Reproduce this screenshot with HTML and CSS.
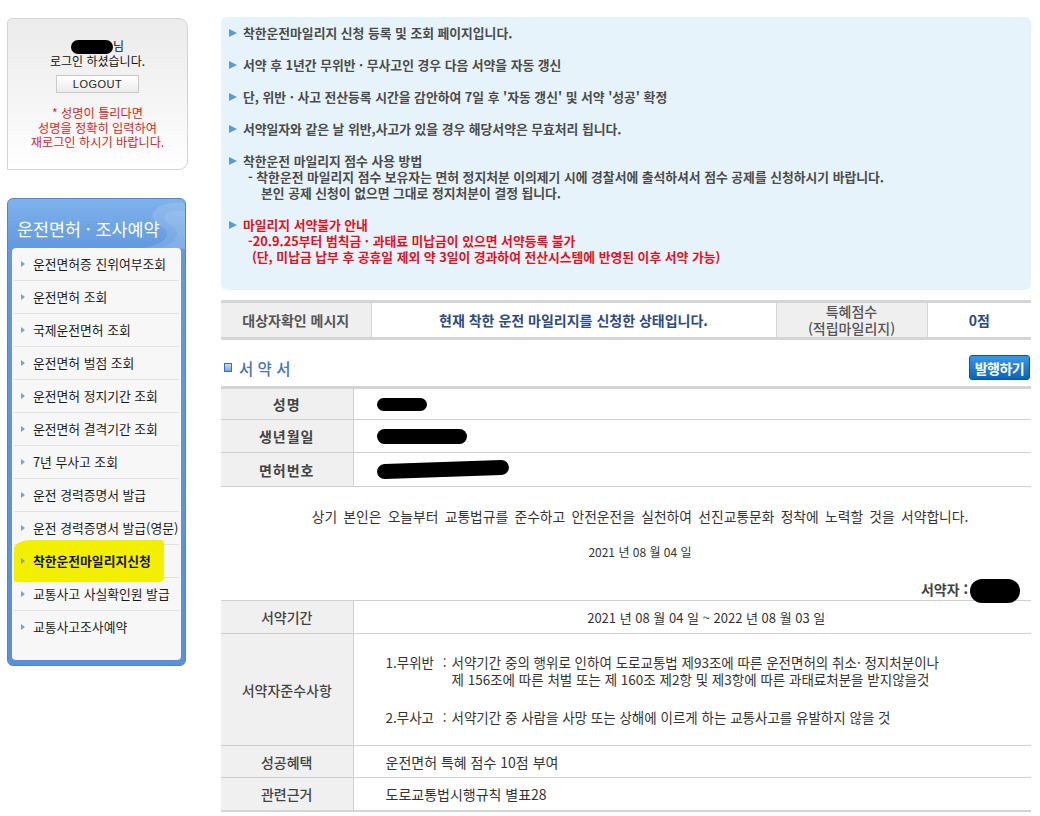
FILE: index.html
```html
<!DOCTYPE html>
<html lang="ko">
<head>
<meta charset="utf-8">
<title>착한운전마일리지신청</title>
<link rel="stylesheet" href="styles.css">
</head>
<body>
<div class="page">
  <aside class="side">
    <div class="login">
      <p><span class="blob blob-name"></span>님</p>
      <p>로그인 하셨습니다.</p>
      <button class="logout" type="button">LOGOUT</button>
      <p class="warn"><span>* 성명이 틀리다면</span><span>성명을 정확히 입력하여</span><span>재로그인 하시기 바랍니다.</span></p>
    </div>
    <nav class="menu">
      <svg class="swirl" width="56" height="48" viewBox="0 0 56 48">
        <path d="M56 2 C36 0 20 8 24 18 C27 26 40 26 38 34 C36 42 22 46 8 48 L56 48 Z" fill="#ffffff" opacity="0.13"/>
        <path d="M56 10 C44 8 34 12 36 18 C38 24 50 26 48 34 C46 40 40 44 30 48 L56 48 Z" fill="#ffffff" opacity="0.10"/>
      </svg>
      <div class="menu-head">운전면허 · 조사예약</div>
      <ul class="menu-list">
        <li><i class="arr"></i>운전면허증 진위여부조회</li>
        <li><i class="arr"></i>운전면허 조회</li>
        <li><i class="arr"></i>국제운전면허 조회</li>
        <li><i class="arr"></i>운전면허 벌점 조회</li>
        <li><i class="arr"></i>운전면허 정지기간 조회</li>
        <li><i class="arr"></i>운전면허 결격기간 조회</li>
        <li><i class="arr"></i>7년 무사고 조회</li>
        <li><i class="arr"></i>운전 경력증명서 발급</li>
        <li><i class="arr"></i>운전 경력증명서 발급(영문)</li>
        <li class="on"><span class="marker"></span><i class="arr"></i>착한운전마일리지신청</li>
        <li><i class="arr"></i>교통사고 사실확인원 발급</li>
        <li><i class="arr"></i>교통사고조사예약</li>
      </ul>
    </nav>
  </aside>

  <main class="main">
    <section class="notice">
      <p>착한운전마일리지 신청 등록 및 조회 페이지입니다.</p>
      <p>서약 후 1년간 무위반 · 무사고인 경우 다음 서약을 자동 갱신</p>
      <p>단, 위반 · 사고 전산등록 시간을 감안하여 7일 후 '자동 갱신' 및 서약 '성공' 확정</p>
      <p>서약일자와 같은 날 위반,사고가 있을 경우 해당서약은 무효처리 됩니다.</p>
      <p>착한운전 마일리지 점수 사용 방법
        <span class="sub">- 착한운전 마일리지 점수 보유자는 면허 정지처분 이의제기 시에 경찰서에 출석하셔서 점수 공제를 신청하시기 바랍니다.</span>
        <span class="sub sub2">본인 공제 신청이 없으면 그대로 정지처분이 결정 됩니다.</span>
      </p>
      <p class="red">마일리지 서약불가 안내
        <span class="sub">-20.9.25부터 범칙금 · 과태료 미납금이 있으면 서약등록 불가</span>
        <span class="sub sub3">(단, 미납금 납부 후 공휴일 제외 약 3일이 경과하여 전산시스템에 반영된 이후 서약 가능)</span>
      </p>
    </section>

    <table class="status">
      <tr>
        <th class="c1">대상자확인 메시지</th>
        <td class="c2">현재 착한 운전 마일리지를 신청한 상태입니다.</td>
        <th class="c3">특혜점수<br>(적립마일리지)</th>
        <td class="c4">0점</td>
      </tr>
    </table>

    <div class="sec-head">
      <h2 class="sec-title"><i class="sq"></i>서 약 서</h2>
      <button class="issue" type="button">발행하기</button>
    </div>

    <table class="form">
      <tr class="f1"><th>성명</th><td><span class="blob b1"></span></td></tr>
      <tr class="f2"><th>생년월일</th><td><span class="blob b2"></span></td></tr>
      <tr class="f3"><th>면허번호</th><td><span class="blob b3"></span></td></tr>
    </table>

    <div class="pledge">
      <p>상기 본인은 오늘부터 교통법규를 준수하고 안전운전을 실천하여 선진교통문화 정착에 노력할 것을 서약합니다.</p>
      <p class="date">2021 년 08 월 04 일</p>
      <p class="signer">서약자 :<span class="blob b4"></span></p>
    </div>

    <table class="terms">
      <tr class="r1"><th>서약기간</th><td class="period">2021 년 08 월 04 일 ~ 2022 년 08 월 03 일</td></tr>
      <tr class="r2"><th>서약자준수사항</th>
        <td>
          <div class="rule"><span class="k"><span>1.무위반</span><span>:</span></span><span>서약기간 중의 행위로 인하여 도로교통법 제93조에 따른 운전면허의 취소· 정지처분이나<br>제 156조에 따른 처벌 또는 제 160조 제2항 및 제3항에 따른 과태료처분을 받지않을것</span></div>
          <div class="rule"><span class="k"><span>2.무사고</span><span>:</span></span><span>서약기간 중 사람을 사망 또는 상해에 이르게 하는 교통사고를 유발하지 않을 것</span></div>
        </td>
      </tr>
      <tr class="r3"><th>성공혜택</th><td>운전면허 특혜 점수 10점 부여</td></tr>
      <tr class="r4"><th>관련근거</th><td>도로교통법시행규칙 별표28</td></tr>
    </table>
  </main>
</div>
</body>
</html>
```
FILE: styles.css
```css
* { box-sizing: border-box; margin: 0; padding: 0; }

body {
  width: 1040px;
  background: #fff;
  color: #333;
  font-family: "Noto Sans CJK KR", "Noto Sans", sans-serif;
  font-size: 12px;
}

.page {
  display: flex;
  align-items: flex-start;
  padding: 17px 0 0 7px;
}

/* ---------- sidebar ---------- */
.side { width: 181px; flex: none; }

.login {
  margin-top: 1px;
  height: 152px;
  border: 1px solid #d4d4d4;
  border-radius: 5px 9px 9px 0;
  background: linear-gradient(#ebebeb, #f6f6f6 60%, #fff);
  padding-top: 20px;
  text-align: center;
  line-height: 14px;
  color: #111;
}

.blob { display: inline-block; background: #000; border-radius: 9px; }
.blob-name { width: 42px; height: 14px; vertical-align: -3px; border-radius: 7px; }

.logout {
  display: block;
  margin: 7px auto 0;
  width: 83px;
  height: 18px;
  border: 1px solid #c9c9c9;
  background: linear-gradient(#ffffff, #ebebeb);
  font: 11px "Liberation Sans", Arial, sans-serif;
  letter-spacing: 0.5px;
  color: #222;
}

.warn { margin-top: 13px; color: #d6251c; font-size: 12.2px; }
.warn span { display: block; height: 14.5px; line-height: 14.5px; }

.menu {
  position: relative;
  margin-top: 28px;
  width: 179px;
  border: 1px solid #4f86d0;
  border-radius: 6px;
  background: linear-gradient(#80b3ec 0, #6399de 48px, #5b90d8);
  padding: 0 4px 5px;
}
.swirl { position: absolute; right: 0; top: 2px; border-top-right-radius: 6px; }
.menu-head {
  position: relative;
  height: 49px;
  padding: 19px 0 0 5px;
  font-size: 17.4px;
  line-height: 22px;
  color: #fff;
}

.menu-list {
  list-style: none;
  background: #f7f7f7;
  border-radius: 4px;
  padding: 0 2px 16px;
}
.menu-list li {
  position: relative;
  height: 33px;
  line-height: 32px;
  padding-left: 19px;
  border-bottom: 1px solid #e1e1e1;
  color: #1a1a1a;
  font-size: 12.8px;
  white-space: nowrap;
}
.menu-list li:last-child { border-bottom: 0; }
.arr {
  position: absolute;
  left: 7px;
  top: 13px;
  border-left: 4px solid #7f9fc8;
  border-top: 3px solid transparent;
  border-bottom: 3px solid transparent;
}
.menu-list li.on { z-index: 0; font-weight: 700; color: #111; }
.marker {
  position: absolute;
  z-index: -1;
  left: 0;
  top: -5px;
  width: 150px;
  height: 42px;
  background: #f3ef00;
  border-radius: 16px 3px 5px 2px / 9px 3px 4px 2px;
}

/* ---------- main ---------- */
.main { width: 810px; margin-left: 33px; flex: none; }

.notice {
  background: #e7f3fa;
  border-radius: 6px;
  padding: 8px 10px 25px 8px;
  color: #4b4b4b;
  font-weight: 700;
  font-size: 12.8px;
  line-height: 16px;
}
.notice p { position: relative; padding-left: 14px; }
.notice p + p { margin-top: 16px; }
.notice p::before {
  content: "";
  position: absolute;
  left: 0;
  top: 3.5px;
  border-left: 8px solid #5b9ad9;
  border-top: 4.5px solid transparent;
  border-bottom: 4.5px solid transparent;
}
.notice .sub { display: block; padding-left: 5px; }
.notice .sub2 { padding-left: 18px; }
.notice .sub3 { padding-left: 9px; }
.notice .red { color: #e5101d; }

.status {
  width: 100%;
  margin-top: 10px;
  border-collapse: collapse;
  border-top: 3px solid #d4d4d4;
  border-bottom: 3px solid #d4d4d4;
}
.status th, .status td {
  height: 36px;
  text-align: center;
  border-left: 1px solid #d6d6d6;
}
.status tr > :first-child { border-left: 0; }
.status th { background: #efefef; color: #555; font-weight: 700; font-size: 14px; line-height: 17px; }
.status .c1 { width: 150px; }
.status .c2 { width: 405px; color: #2b4a86; font-weight: 700; font-size: 14px; }
.status .c3 { width: 151px; font-weight: 500; }
.status .c4 { color: #2b4a86; font-weight: 700; font-size: 14px; }

.sec-head {
  display: flex;
  align-items: center;
  justify-content: space-between;
  height: 46px;
  padding: 15px 1px 6px 3px;
}
.sec-title {
  display: flex;
  align-items: center;
  font-size: 15.5px;
  font-weight: 500;
  color: #4677b2;
}
.sq {
  width: 8px;
  height: 9px;
  margin-right: 7px;
  border: 1px solid #3f70ad;
  background: linear-gradient(#c9ddf3, #7fa6d6);
}
.issue {
  height: 25px;
  width: 61px;
  border: 1px solid #0b559f;
  border-radius: 3px;
  background: linear-gradient(#3a97e6, #0d62bb);
  color: #fff;
  font: 700 14px "Noto Sans CJK KR", sans-serif;
  letter-spacing: -0.5px;
}

.form {
  width: 100%;
  border-collapse: collapse;
  border-top: 3px solid #d4d4d4;
  border-bottom: 1px solid #cfcfcf;
}
.form th {
  width: 132px;
  background: #f0f0f0;
  border-right: 1px solid #d0d0d0;
  color: #444;
  font-size: 14px;
  font-weight: 700;
  letter-spacing: 1px;
}
.form .f1 > * { height: 32px; }
.form .f2 > * { height: 33px; }
.form .f3 > * { height: 34px; }
.form tr + tr > * { border-top: 1px solid #d0d0d0; }
.form td { padding-left: 23px; }
.b1 { width: 50px; height: 13px; display: block; }
.b2 { width: 90px; height: 15px; display: block; }
.b3 { width: 132px; height: 15px; display: block; transform: rotate(-2deg); }

.pledge {
  padding: 20px 11px 0 39px;
  text-align: center;
  font-size: 13.8px;
  line-height: 18px;
  color: #333;
  word-spacing: 2.4px;
}
.pledge .date { margin-top: 18px; font-size: 12px; word-spacing: 0; }
.pledge .signer { margin-top: 19px; text-align: right; font-weight: 700; color: #444; font-size: 14px; word-spacing: 0; }
.b4 { width: 50px; height: 24px; vertical-align: middle; margin: -3px 0 -3px 2px; border-radius: 12px; }

.terms {
  width: 100%;
  border-collapse: collapse;
  border-top: 1px solid #d0d0d0;
  border-bottom: 2px solid #d4d4d4;
}
.terms th {
  width: 132px;
  background: #f0f0f0;
  border-right: 1px solid #d0d0d0;
  color: #444;
  font-size: 14px;
  font-weight: 500;
}
.terms td { padding-left: 32px; font-size: 14px; color: #333; }
.terms tr + tr > * { border-top: 1px solid #d0d0d0; }
.terms .r1 > * { height: 33px; }
.terms .r2 > * { height: 112px; }
.terms .r3 > * { height: 32px; }
.terms .r4 > * { height: 33px; }
.terms .period { padding-left: 28px; text-align: center; font-size: 13px; }
.rule { display: flex; line-height: 17px; font-size: 13.5px; }
.rule .k { width: 66px; flex: none; display: flex; justify-content: space-between; padding-right: 5px; }
.rule + .rule { margin-top: 21px; }
```
